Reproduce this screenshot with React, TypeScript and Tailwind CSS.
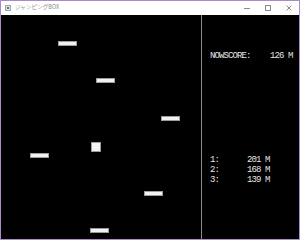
const platforms = [
  { x: 57, y: 26 },
  { x: 95, y: 63 },
  { x: 160, y: 101 },
  { x: 29, y: 138 },
  { x: 143, y: 176 },
  { x: 89, y: 213 },
];

const ranking = [
  { rank: "1:", score: "201 M" },
  { rank: "2:", score: "168 M" },
  { rank: "3:", score: "139 M" },
];

const App = () => {
  return (
    <div className="w-[300px] h-[240px] flex flex-col border border-[#a98bc6] bg-black overflow-hidden">
      {/* Title bar */}
      <div className="h-[14px] shrink-0 bg-white flex items-center">
        <div className="ml-[4px] w-[6px] h-[6px] border border-[#9aa4ac] bg-[#dfe6ea] flex items-center justify-center">
          <div className="w-[2px] h-[2px] bg-[#3a8a7a]" />
        </div>
        <span
          className="ml-[4px] text-[5.6px] leading-none text-[#8c8c8c]"
          style={{ fontFamily: '"Noto Sans CJK JP", "Noto Sans", sans-serif' }}
        >
          ジャンピングBOX
        </span>
        <div className="ml-auto flex items-center h-full">
          <div className="w-[21px] h-full flex items-center justify-center">
            <svg width="6" height="6" viewBox="0 0 6 6">
              <line x1="0" y1="3.5" x2="6" y2="3.5" stroke="#8a8a8a" strokeWidth="1" />
            </svg>
          </div>
          <div className="w-[21px] h-full flex items-center justify-center">
            <svg width="6" height="6" viewBox="0 0 6 6">
              <rect x="0.5" y="0.5" width="5" height="5" fill="none" stroke="#8a8a8a" strokeWidth="1" />
            </svg>
          </div>
          <div className="w-[21px] h-full flex items-center justify-center">
            <svg width="6" height="6" viewBox="0 0 6 6">
              <path d="M0.5 0.5 L5.5 5.5 M5.5 0.5 L0.5 5.5" stroke="#8a8a8a" strokeWidth="1" />
            </svg>
          </div>
        </div>
      </div>

      {/* Client area */}
      <div className="flex-1 flex">
        {/* Game field */}
        <div className="relative w-[200px] h-full">
          {platforms.map((p, i) => (
            <div
              key={i}
              className="absolute w-[19px] h-[5px] bg-[#f2f2f2] border border-[#9c9c9c]"
              style={{ left: p.x, top: p.y }}
            />
          ))}
          {/* Player box */}
          <div className="absolute left-[90px] top-[127px] w-[10px] h-[10px] bg-[#f2f2f2] border border-[#9c9c9c]" />
        </div>

        <div className="w-px h-full bg-[#8a8a8a]" />

        {/* Score panel */}
        <div
          className="flex-1 pl-[8px] pt-[36px] text-[9px] leading-[10px] tracking-[-0.9px] text-[#e6e6e6]"
          style={{ fontFamily: '"Liberation Mono", monospace' }}
        >
          <div className="flex">
            <span className="w-[60px]">NOWSCORE:</span>
            <span>126 M</span>
          </div>
          <div className="mt-[94px] flex flex-col">
            {ranking.map((r) => (
              <div key={r.rank} className="flex">
                <span className="w-[37px]">{r.rank}</span>
                <span>{r.score}</span>
              </div>
            ))}
          </div>
        </div>
      </div>
    </div>
  );
};

export default App;
